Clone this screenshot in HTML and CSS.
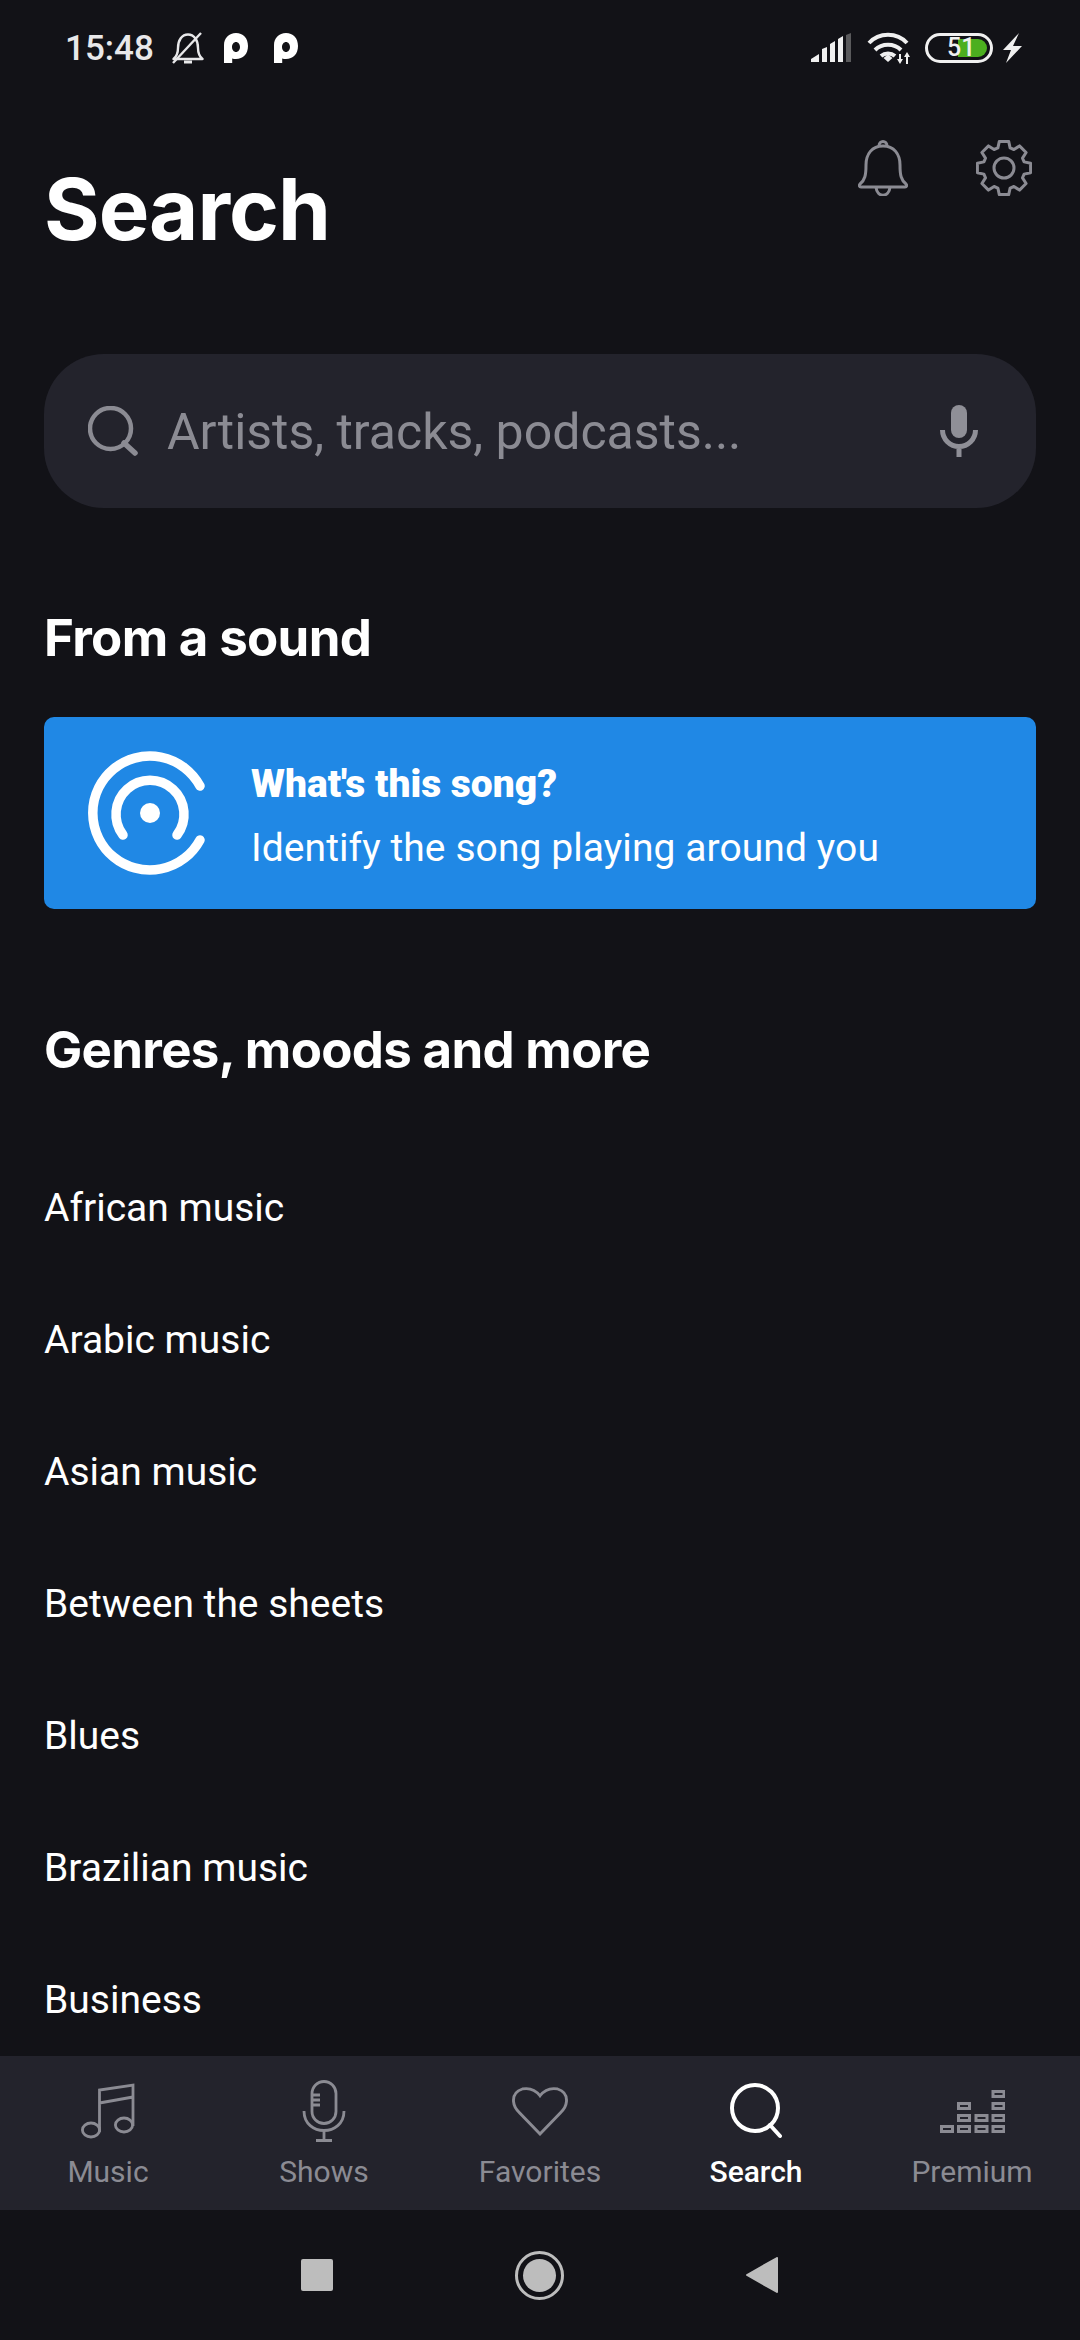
FILE: index.html
```html
<!DOCTYPE html>
<html>

	<head>
		<meta charset="UTF-8">
		<title>Search</title>
		<link rel="stylesheet" href="styles.css">
	</head>

	<body>
		<div class="app">
			<div class="status">
				<span class="time">15:48</span>
				<svg class="st-bell" width="32" height="32" viewBox="0 0 32 32" fill="none" stroke="#e8e8ea" stroke-width="2.400" stroke-linejoin="round">
					<path d="M1.500 27c3-2.500 4.500-6 4.500-11C6 8 10 2.500 16 2.500S26 8 26 16c0 5 1.500 8.500 4.500 11z" />
					<path d="M12 30h8" stroke-width="3" />
					<path d="M1 31L29 1" />
				</svg>
				<svg class="st-p" width="24" height="30" viewBox="0 0 24 30"><path fill="#fff" fill-rule="evenodd" d="M0 30V12C0 5 5 0 12 0s12 5 12 13-5 13-12 13c-1.500 0-2.800-.2-3.800-.6V30zM12 9c-2.200 0-4 2.200-4 5s1.800 5 4 5 4-2.200 4-5-1.800-5-4-5z" /></svg>
				<svg class="st-p st-p2" width="24" height="30" viewBox="0 0 24 30"><path fill="#fff" fill-rule="evenodd" d="M0 30V12C0 5 5 0 12 0s12 5 12 13-5 13-12 13c-1.500 0-2.800-.2-3.800-.6V30zM12 9c-2.200 0-4 2.200-4 5s1.800 5 4 5 4-2.200 4-5-1.800-5-4-5z" /></svg>
				<span class="grow"></span>
				<svg class="st-signal" width="40" height="30" viewBox="0 0 40 30">
					<path fill="#f0f0f0" d="M0 29v-3l8-5v8zM11 29V16l5-2v15zM19 29V11l5-3v21zM27 29V6l5-3v26z" />
					<path fill="#5a5a5c" d="M35 29V2l5-2v29z" />
				</svg>
				<svg class="st-wifi" width="44" height="32" viewBox="0 0 44 32" fill="none" stroke="#f0f0f0" stroke-width="4">
					<path d="M2 11C12 0 30 0 40 11" />
					<path d="M8 18c7-7 19-7 26 0" />
					<path d="M14 24c4-3.500 10-3.500 14 0" />
					<path d="M16.500 26l4.500-3.500 4.500 3.500-4.500 4z" fill="#f0f0f0" stroke="none" />
					<path d="M33 22v6M40 25v7" stroke-width="2" />
					<path d="M30 27h6l-3 5zM37 25h6l-3-5z" fill="#f0f0f0" stroke="none" />
				</svg>
				<div class="battery">
					<div class="battery-fill"></div>
					<span class="battery-num">51</span>
				</div>
				<svg class="st-bolt" width="19" height="30" viewBox="0 0 19 30"><path fill="#f0f0f0" d="M16 0L0 17h8L3 30l16-17h-9z" /></svg>
			</div>

			<div class="main">
				<div class="top-icons">
					<svg width="50" height="56" viewBox="0 0 50 56" fill="none" stroke="#8b8b93" stroke-width="3" stroke-linejoin="round">
						<path d="M25 6c-11 0-17 8-17 19 0 10-1 15-6 19-1 1-1 3 1 3h44c2 0 2-2 1-3-5-4-6-9-6-19C42 14 36 6 25 6z" />
						<path d="M21 6c0-6 8-6 8 0" />
						<path d="M18 47c1 11 13 11 14 0" />
					</svg>
					<svg width="56" height="56" viewBox="0 0 56 56" fill="none" stroke="#8b8b93" stroke-width="3" stroke-linejoin="round">
						<circle cx="28" cy="28" r="10" />
						<path d="M21.900 7.900L23.300 1.400H32.700L34.100 7.900L37.900 9.500L43.500 5.900L50.100 12.500L46.500 18.100L48.100 21.900L54.600 23.300V32.700L48.100 34.100L46.500 37.900L50.100 43.500L43.500 50.100L37.900 46.500L34.100 48.100L32.700 54.600H23.300L21.900 48.100L18.100 46.500L12.500 50.100L5.900 43.500L9.500 37.900L7.900 34.100L1.400 32.700V23.300L7.900 21.900L9.500 18.100L5.900 12.500L12.500 5.900L18.100 9.500z" />
					</svg>
				</div>
				<h1 class="title">Search</h1>

				<div class="searchbar">
					<svg width="50" height="50" viewBox="0 0 50 50" fill="none" stroke="#8b8b93" stroke-width="4.500" stroke-linecap="round">
						<circle cx="22.500" cy="22.500" r="20.500" />
						<path d="M36 37l11 10" stroke-width="5.500" />
					</svg>
					<span class="placeholder">Artists, tracks, podcasts...</span>
					<svg width="38" height="52" viewBox="0 0 38 52">
						<rect x="11" y="0" width="16" height="33" rx="8" fill="#8f8f97" />
						<path d="M2.500 25a16.500 16.500 0 0 0 33 0M19 41v11" fill="none" stroke="#8f8f97" stroke-width="5" />
					</svg>
				</div>

				<h2 class="sec-title sound-title">From a sound</h2>
				<div class="card">
					<svg width="118" height="124" viewBox="0 0 118 124" fill="none" stroke="#fff" stroke-width="9.500" stroke-linecap="round">
						<path d="M112 35A57 57 0 1 0 112 89" />
						<path d="M35 84A34 34 0 1 1 89 84" />
						<circle cx="62" cy="62" r="10" fill="#fff" stroke="none" />
					</svg>
					<div class="card-text">
						<div class="card-title">What's this song?</div>
						<div class="card-sub">Identify the song playing around you</div>
					</div>
				</div>

				<h2 class="sec-title genre-title">Genres, moods and more</h2>
				<ul class="genres">
					<li>African music</li>
					<li>Arabic music</li>
					<li>Asian music</li>
					<li>Between the sheets</li>
					<li>Blues</li>
					<li>Brazilian music</li>
					<li>Business</li>
				</ul>
			</div>

			<div class="tabs">
				<div class="tab">
					<div class="tab-icon">
						<svg width="54" height="56" viewBox="0 0 54 56" fill="none" stroke="#8b8b93" stroke-width="2.800">
							<path d="M18.500 49V7L52 2v41M18.500 20L52 14" />
							<ellipse cx="10" cy="47" rx="8.600" ry="7" />
							<ellipse cx="43" cy="42" rx="8.600" ry="7" />
						</svg>
					</div>
					<span>Music</span>
				</div>
				<div class="tab">
					<div class="tab-icon">
						<svg width="44" height="62" viewBox="0 0 42 62" fill="none" stroke="#8b8b93" stroke-width="2.800">
							<rect x="9" y="1.500" width="24" height="42" rx="12" />
							<path d="M9 15h8M9 20h8M9 25h8" />
							<path d="M1 31c0 26 40 26 40 0M21 50v10M13 60.500h16" />
						</svg>
					</div>
					<span>Shows</span>
				</div>
				<div class="tab">
					<div class="tab-icon">
						<svg width="56" height="49" viewBox="0 0 54 50" preserveAspectRatio="none" fill="none" stroke="#8b8b93" stroke-width="2.800">
							<path d="M27 9C22 2 15 1 10 2 4 4 1 9 1.500 15c.3 4 2.500 8 5.500 11L27 48l20-22c3-3 5.200-7 5.500-11C53 9 50 4 44 2c-5-1-12 0-17 7z" />
						</svg>
					</div>
					<span>Favorites</span>
				</div>
				<div class="tab tab-on">
					<div class="tab-icon">
						<svg width="52" height="56" viewBox="0 0 52 56" fill="none" stroke="#fff" stroke-width="4" stroke-linecap="round">
							<circle cx="25" cy="25" r="23" />
							<path d="M40 42l10 11" />
						</svg>
					</div>
					<span>Search</span>
				</div>
				<div class="tab">
					<div class="tab-icon">
						<svg width="65" height="43" viewBox="0 0 65 43" fill="none" stroke="#8b8b93" stroke-width="3">
							<path d="M1.500 36.500h11v5h-11zM18.500 36.500h11v5h-11zM36 36.500h11v5H36zM53 36.500h11v5H53zM18.500 25.500h11v5h-11zM36 25.500h11v5H36zM53 25.500h11v5H53zM18.500 13.500h11v5h-11zM53 13.500h11v5H53zM53 1.500h11v5H53z" />
						</svg>
					</div>
					<span>Premium</span>
				</div>
			</div>

			<div class="navbar">
				<div class="nav-square"></div>
				<div class="nav-home"><div class="nav-dot"></div></div>
				<svg width="32" height="36" viewBox="0 0 32 36"><path fill="#bdbdbd" stroke="#bdbdbd" stroke-width="2" stroke-linejoin="round" d="M31 1v34L1 18z" /></svg>
			</div>
		</div>
	</body>

</html>
```

FILE: styles.css
```css
* {
	margin: 0;
	padding: 0;
	box-sizing: border-box;
}

body {
	background-color: #121217;
	font-family: Roboto, sans-serif;
	color: #fff;
}

svg {
	display: block;
	flex-shrink: 0;
}

.app {
	width: 1080px;
	height: 2340px;
	display: flex;
	flex-direction: column;
	overflow: hidden;
}

/* status bar */
.status {
	height: 96px;
	flex-shrink: 0;
	display: flex;
	align-items: center;
	padding: 0 58px 0 65px;
}

.grow {
	flex: 1;
}

.time {
	font-size: 35px;
	font-weight: 500;
	color: #e8e8ea;
	width: 107px;
}

.st-p {
	margin-left: 20px;
}

.st-p2 {
	margin-left: 26px;
}

.st-wifi {
	margin-left: 16px;
}

.battery {
	position: relative;
	width: 68px;
	height: 30px;
	margin-left: 14px;
	border: 3px solid #f0f0f0;
	border-radius: 15px;
}

.battery-fill {
	position: absolute;
	left: 30px;
	top: 3px;
	bottom: 3px;
	right: 3px;
	background-color: #4caf1f;
	border-radius: 0 10px 10px 0;
}

.battery-num {
	position: absolute;
	left: 19px;
	top: -1px;
	font-size: 25px;
	line-height: 26px;
	font-weight: 500;
	color: #f0f0f0;
}

.st-bolt {
	margin-left: 10px;
}

/* main column */
.main {
	flex: 1;
	min-height: 0;
	overflow: hidden;
	padding: 44px 44px 0;
}

.top-icons {
	display: flex;
	justify-content: flex-end;
	gap: 68px;
	padding-right: 4px;
	height: 56px;
}

.title {
	font-family: Inter, sans-serif;
	font-size: 85px;
	font-weight: 700;
	line-height: 100px;
	letter-spacing: -1px;
	margin: -36px 0 0 0;
}

.searchbar {
	height: 154px;
	margin-top: 94px;
	background-color: #23232c;
	border-radius: 60px;
	display: flex;
	align-items: center;
	padding: 0 58px 0 44px;
}

.placeholder {
	flex: 1;
	margin-left: 29px;
	padding-top: 2px;
	font-size: 50px;
	color: #8b8b93;
}

.sec-title {
	font-family: Inter, sans-serif;
	font-size: 51px;
	font-weight: 700;
	line-height: 60px;
	letter-spacing: -0.7px;
}

.sound-title {
	margin-top: 100px;
}

.card {
	height: 192px;
	margin-top: 49px;
	background-color: #2088e5;
	border-radius: 10px;
	display: flex;
	align-items: center;
	padding-left: 44px;
}

.card-text {
	margin-left: 45px;
	padding-top: 6px;
}

.card-title {
	font-size: 39px;
	font-weight: 900;
	line-height: 44px;
}

.card-sub {
	font-size: 39px;
	line-height: 44px;
	margin-top: 20px;
	letter-spacing: 0.08px;
}

.genre-title {
	margin-top: 111px;
}

.genres {
	list-style: none;
	margin-top: 62px;
}

.genres li {
	height: 132px;
	line-height: 132px;
	font-size: 39px;
}

/* bottom tabs */
.tabs {
	height: 154px;
	flex-shrink: 0;
	background-color: #23232c;
	display: flex;
}

.tab {
	flex: 1;
	display: flex;
	flex-direction: column;
	align-items: center;
	padding-top: 24px;
	font-size: 30px;
	line-height: 40px;
	color: #8b8b93;
}

.tab-icon {
	height: 62px;
	display: flex;
	align-items: center;
	justify-content: center;
}

.tab span {
	margin-top: 10px;
}

.tab-on {
	color: #fff;
	font-weight: 500;
}

/* android nav */
.navbar {
	height: 130px;
	flex-shrink: 0;
	display: flex;
	align-items: center;
	justify-content: center;
	gap: 182px;
	padding-right: 2px;
}

.nav-square {
	width: 32px;
	height: 32px;
	background-color: #bdbdbd;
	border-radius: 2px;
}

.nav-home {
	width: 49px;
	height: 49px;
	border: 3px solid #bdbdbd;
	border-radius: 50%;
	padding: 5px;
}

.nav-dot {
	width: 100%;
	height: 100%;
	background-color: #bdbdbd;
	border-radius: 50%;
}
```
